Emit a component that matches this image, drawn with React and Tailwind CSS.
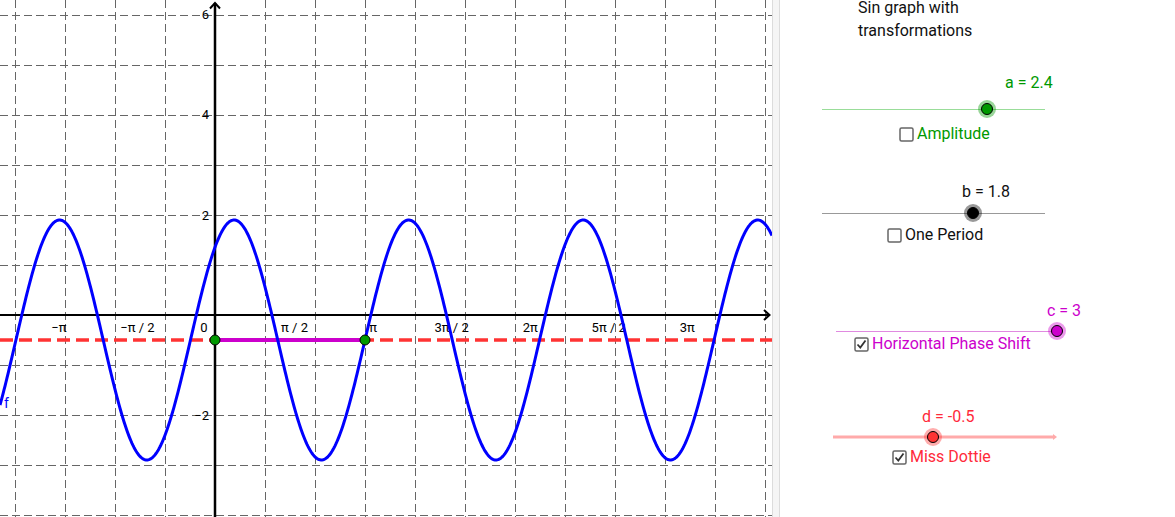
import React from "react";

const OX = 215;
const OY = 315;
const S = 50;

function curvePath() {
  let d = "";
  for (let px = 0; px <= 772; px += 1) {
    const x = (px - OX) / S;
    const y = 2.4 * Math.sin(1.8 * (x - 3)) - 0.5;
    const py = OY - S * y;
    d += (px === 0 ? "M" : "L") + px + " " + py.toFixed(2) + " ";
  }
  return d;
}

const xLabels = [
  [-2, "−π"],
  [-1, "−π / 2"],
  [1, "π / 2"],
  [2, "π"],
  [3, "3π / 2"],
  [4, "2π"],
  [5, "5π / 2"],
  [6, "3π"],
];

function Graph() {
  const vLines = [];
  for (let x = 15; x < 772; x += 50) if (x !== OX) vLines.push(x);
  const hLines = [];
  for (let y = 15; y < 517; y += 50) if (y !== OY) hLines.push(y);

  return (
    <svg width="772" height="517" className="block shrink-0 bg-white" style={{ fontFamily: "Roboto, 'Liberation Sans', sans-serif" }}>
      {vLines.map((x) => (
        <line key={"v" + x} x1={x + 0.5} y1="0" x2={x + 0.5} y2="517" stroke="#666" strokeWidth="1" strokeDasharray="8 4" />
      ))}
      {hLines.map((y) => (
        <line key={"h" + y} x1="0" y1={y + 0.5} x2="772" y2={y + 0.5} stroke="#666" strokeWidth="1" strokeDasharray="8 4" />
      ))}

      {/* axes */}
      <line x1="0" y1={OY} x2="769" y2={OY} stroke="#000" strokeWidth="2" />
      <polyline points="764,310 769.5,315 764,320" fill="none" stroke="#000" strokeWidth="2" />
      <line x1={OX} y1="517" x2={OX} y2="3" stroke="#000" strokeWidth="2.5" />
      <polyline points="210,8.5 215,3 220,8.5" fill="none" stroke="#000" strokeWidth="2" />

      {/* axis labels */}
      {xLabels.map(([k, t]) => (
        <text key={t} x={OX + k * 78.54 + 1} y="332" fontSize="13" textAnchor="middle" fill="#000">
          {t}
        </text>
      ))}
      <text x="204" y="332" fontSize="13" textAnchor="middle" fill="#000">0</text>
      <text x="209" y="19" fontSize="13" textAnchor="end" fill="#000">6</text>
      <text x="209" y="119" fontSize="13" textAnchor="end" fill="#000">4</text>
      <text x="209" y="220" fontSize="13" textAnchor="end" fill="#000">2</text>
      <text x="209" y="420" fontSize="13" textAnchor="end" fill="#000">−2</text>

      {/* Miss Dottie line y = d */}
      <line x1="0" y1="340" x2="772" y2="340" stroke="#ff3333" strokeWidth="3.5" strokeDasharray="13 6" />

      {/* phase shift segment */}
      <line x1={OX} y1="340" x2="365" y2="340" stroke="#cc00cc" strokeWidth="4" />

      {/* function */}
      <path d={curvePath()} fill="none" stroke="#0000ff" strokeWidth="3" strokeLinejoin="round" />
      <text x="4" y="408" fontSize="14" fill="#0000ff">f</text>

      <circle cx={OX} cy="340" r="5" fill="#009900" stroke="#000" strokeWidth="1" />
      <circle cx="365" cy="340" r="5" fill="#009900" stroke="#000" strokeWidth="1" />
    </svg>
  );
}

function Checkbox({ checked }) {
  return (
    <svg width="15" height="15" viewBox="0 0 15 15" className="shrink-0">
      <rect x="1" y="1" width="13" height="13" rx="1.5" fill="#fff" stroke="#666" strokeWidth="1.5" />
      {checked && <path d="M3.5 7.5 L6.3 10.5 L11.5 3.5" fill="none" stroke="#333" strokeWidth="1.8" />}
    </svg>
  );
}

function Knob({ left, fill, halo }) {
  return (
    <span
      className="absolute top-1/2 h-[18px] w-[18px] -translate-x-1/2 -translate-y-1/2 rounded-full flex items-center justify-center"
      style={{ left, background: halo }}
    >
      <span className="h-[12px] w-[12px] rounded-full border border-black" style={{ background: fill }} />
    </span>
  );
}

export default function App() {
  return (
    <div className="flex h-[517px] w-[1175px] overflow-hidden bg-white" style={{ fontFamily: "Roboto, 'Liberation Sans', sans-serif" }}>
      <Graph />
      <div className="w-[8px] shrink-0 border-l border-r border-[#dcdcdc] bg-[#f5f5f5]" />

      <div className="flex-1 flex flex-col text-[16px]">
        <div className="ml-[78px] mt-[-4px] leading-[23px] text-[16px] text-[#111]">
          <div>Sin graph with</div>
          <div>transformations</div>
        </div>

        {/* slider a */}
        <div className="ml-[225px] mt-[31px] h-[20px] leading-[20px] text-[#009900]">a = 2.4</div>
        <div className="relative ml-[42px] mt-[8px] h-[16px] w-[223px]">
          <div className="absolute left-0 right-0 top-1/2 h-px bg-[#99dd99]" />
          <Knob left="165px" fill="#009900" halo="rgba(0,153,0,0.4)" />
        </div>
        <div className="ml-[119px] mt-[7px] flex h-[20px] items-center gap-[3px] text-[#009900]">
          <Checkbox />
          <span>Amplitude</span>
        </div>

        {/* slider b */}
        <div className="ml-[182px] mt-[38px] h-[20px] leading-[20px] text-[#111]">b = 1.8</div>
        <div className="relative ml-[42px] mt-[3px] h-[16px] w-[223px]">
          <div className="absolute left-0 right-0 top-1/2 h-px bg-[#999]" />
          <Knob left="151px" fill="#000" halo="rgba(0,0,0,0.4)" />
        </div>
        <div className="ml-[107px] mt-[4px] flex h-[20px] items-center gap-[3px] text-[#111]">
          <Checkbox />
          <span>One Period</span>
        </div>

        {/* slider c */}
        <div className="ml-[267px] mt-[56px] h-[20px] leading-[20px] text-[#cc00cc]">c = 3</div>
        <div className="relative ml-[56px] mt-[2px] h-[16px] w-[221px]">
          <div className="absolute left-0 right-0 top-1/2 h-px bg-[#e08ae0]" />
          <Knob left="221px" fill="#cc00cc" halo="rgba(204,0,204,0.4)" />
        </div>
        <div className="ml-[74px] mt-[-5px] flex h-[20px] items-center gap-[3px] text-[#cc00cc]">
          <Checkbox checked />
          <span>Horizontal Phase Shift</span>
        </div>

        {/* slider d */}
        <div className="ml-[142px] mt-[53px] h-[20px] leading-[20px] text-[#ff2a3a]">d = -0.5</div>
        <div className="relative ml-[53px] mt-[2px] h-[16px] w-[224px]">
          <div className="absolute left-0 right-[3px] top-1/2 h-[3px] -translate-y-1/2 bg-[#ffaaaa]" />
          <div className="absolute right-0 top-1/2 h-0 w-0 -translate-y-1/2 border-y-[3px] border-l-[4px] border-y-transparent border-l-[#ffaaaa]" />
          <Knob left="100px" fill="#ff3333" halo="rgba(255,51,51,0.4)" />
        </div>
        <div className="ml-[112px] mt-[2px] flex h-[20px] items-center gap-[3px] text-[#ff2a3a]">
          <Checkbox checked />
          <span>Miss Dottie</span>
        </div>
      </div>
    </div>
  );
}
